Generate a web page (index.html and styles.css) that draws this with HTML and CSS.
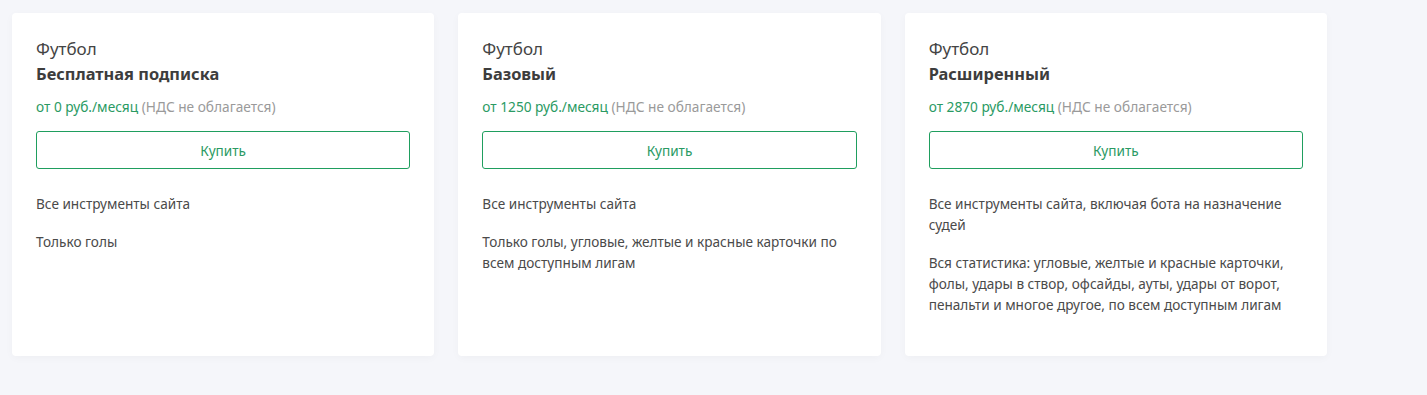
FILE: index.html
```html
<!DOCTYPE html>
<html lang="ru">
<head>
    <meta charset="UTF-8">
    <meta name="viewport" content="width=device-width, initial-scale=1.0">
    <title>Подписки</title>
    <link rel="stylesheet" href="styles.css">
</head>
<body>
    <div class="plans">
        <div class="plan">
            <div class="plan-sport">Футбол</div>
            <div class="plan-name">Бесплатная подписка</div>
            <div class="plan-price">от 0 руб./месяц <span class="vat">(НДС не облагается)</span></div>
            <button class="buy">Купить</button>
            <p>Все инструменты сайта</p>
            <p>Только голы</p>
        </div>
        <div class="plan">
            <div class="plan-sport">Футбол</div>
            <div class="plan-name">Базовый</div>
            <div class="plan-price">от 1250 руб./месяц <span class="vat">(НДС не облагается)</span></div>
            <button class="buy">Купить</button>
            <p>Все инструменты сайта</p>
            <p>Только голы, угловые, желтые и красные карточки по всем доступным лигам</p>
        </div>
        <div class="plan">
            <div class="plan-sport">Футбол</div>
            <div class="plan-name">Расширенный</div>
            <div class="plan-price">от 2870 руб./месяц <span class="vat">(НДС не облагается)</span></div>
            <button class="buy">Купить</button>
            <p>Все инструменты сайта, включая бота на назначение судей</p>
            <p>Вся статистика: угловые, желтые и красные карточки, фолы, удары в створ, офсайды, ауты, удары от ворот, пенальти и многое другое, по всем доступным лигам</p>
        </div>
    </div>
</body>
</html>
```

FILE: styles.css
```css
body{
    margin: 0;
    font-family: "Noto Sans", Arial, sans-serif;
    background-color: #f5f6fa;
    color: #4a4a4a;
}
.plans{
    display: grid;
    grid-template-columns: repeat(3, 1fr);
    gap: 24px;
    width: 1315px;
    padding: 13px 12px;
}
.plan{
    height: 343px;
    box-sizing: border-box;
    padding: 26px 24px;
    background-color: #fff;
    border-radius: 4px;
    box-shadow: 0 2px 8px rgba(0, 0, 0, 0.03);
}
.plan-sport{
    font-size: 17px;
    line-height: 20px;
    color: #444;
}
.plan-name{
    margin-top: 4px;
    font-size: 16.4px;
    line-height: 22px;
    font-weight: bold;
    color: #3d3d3d;
}
.plan-price{
    margin-top: 13px;
    font-size: 13.7px;
    line-height: 18px;
    color: #2a9a63;
}
.vat{
    color: #9a9a9a;
}
.buy{
    display: block;
    width: 100%;
    height: 38px;
    margin-top: 15px;
    font-family: inherit;
    font-size: 13.6px;
    color: #2a9a63;
    background-color: #fff;
    border: 1px solid #1f9e5e;
    border-radius: 3px;
    cursor: pointer;
}
.plan p{
    margin: 0;
    margin-top: 17px;
    font-size: 13.6px;
    line-height: 21px;
}
.buy + p{
    margin-top: 24px;
}
```
